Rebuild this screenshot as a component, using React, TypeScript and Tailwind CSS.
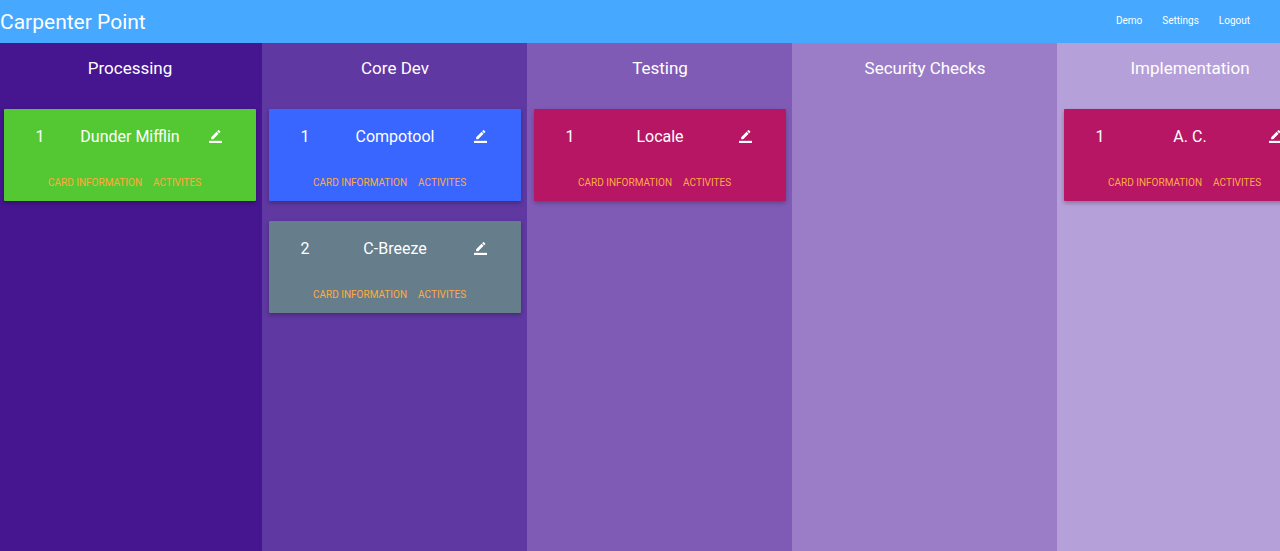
type Card = { id: number; title: string; color: string };
type Column = { name: string; color: string; cards: Card[] };

const columns: Column[] = [
  {
    name: "Processing",
    color: "bg-[#451690]",
    cards: [{ id: 1, title: "Dunder Mifflin", color: "bg-[#54c832]" }],
  },
  {
    name: "Core Dev",
    color: "bg-[#5f38a2]",
    cards: [
      { id: 1, title: "Compotool", color: "bg-[#3866ff]" },
      { id: 2, title: "C-Breeze", color: "bg-[#667d8b]" },
    ],
  },
  {
    name: "Testing",
    color: "bg-[#7f5bb6]",
    cards: [{ id: 1, title: "Locale", color: "bg-[#b71665]" }],
  },
  { name: "Security Checks", color: "bg-[#9a7dc6]", cards: [] },
  {
    name: "Implementation",
    color: "bg-[#b6a0d9]",
    cards: [{ id: 1, title: "A. C.", color: "bg-[#b71665]" }],
  },
];

function EditIcon() {
  return (
    <svg viewBox="0 0 24 24" className="size-[13px]" fill="currentColor" aria-hidden="true">
      <path d="M17.75 7L14 3.25l-10 10V17h3.75l10-10zm2.96-2.96c.39-.39.39-1.02 0-1.41L18.37.29c-.39-.39-1.02-.39-1.41 0L15 2.25 18.75 6l1.96-1.96z" />
      <path d="M0 20h24v4H0z" />
    </svg>
  );
}

function BoardCard({ card }: { card: Card }) {
  return (
    <article
      className={`flex h-[92px] flex-col justify-between rounded-[1px] pt-4 pb-[11px] shadow-[0_2px_4px_rgba(0,0,0,0.28)] ${card.color}`}
    >
      <div className="grid grid-cols-[2fr_3fr_2fr] items-center text-center text-[16px] leading-6">
        <span>{card.id}</span>
        <h3 className="whitespace-nowrap">{card.title}</h3>
        <button type="button" aria-label={`Edit ${card.title}`} className="flex justify-center pr-[10px] pb-[2px]">
          <EditIcon />
        </button>
      </div>
      <div className="flex gap-[11px] pl-11 text-[10px] leading-[14px] whitespace-nowrap text-[#ffab40] uppercase">
        <a href="#information">Card Information</a>
        <a href="#activities">Activites</a>
      </div>
    </article>
  );
}

export default function App() {
  return (
    <div className="flex h-screen flex-col overflow-hidden font-['Roboto',sans-serif] text-white">
      <header className="flex h-[43px] shrink-0 items-center justify-between bg-[#46a8ff]">
        <h1 className="text-[21px] leading-8">Carpenter Point</h1>
        <nav className="flex gap-5 pr-[30px] pb-px text-[10px] leading-4">
          <a href="#demo">Demo</a>
          <a href="#settings">Settings</a>
          <a href="#logout">Logout</a>
        </nav>
      </header>
      <main className="-ml-[3px] flex grow overflow-hidden">
        {columns.map((column) => (
          <section key={column.name} className={`w-[265px] shrink-0 pr-[6px] pl-[7px] ${column.color}`}>
            <h2 className="pt-[13px] text-center text-[17px] leading-6">{column.name}</h2>
            <div className="mt-[29px] flex flex-col gap-5">
              {column.cards.map((card) => (
                <BoardCard key={card.id} card={card} />
              ))}
            </div>
          </section>
        ))}
      </main>
    </div>
  );
}
